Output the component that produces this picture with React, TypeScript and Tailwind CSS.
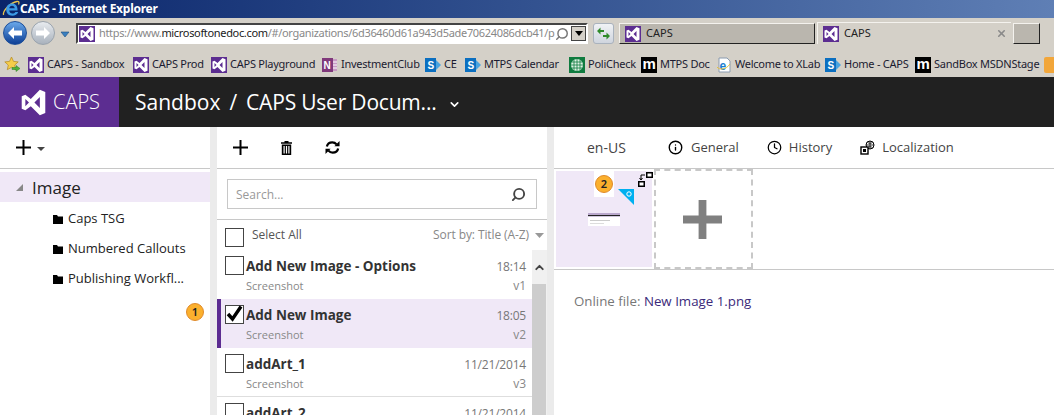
import React from "react";
import { Info, Clock, ChevronDown, ChevronUp, X, Search } from "lucide-react";

const ui = "font-['Open_Sans','Noto_Sans',sans-serif]";
const chrome = "font-['Noto_Sans','DejaVu_Sans',sans-serif]";
const VS_PATH = "M11.5 1l3 1.2v11.6l-3 1.2-5-5-3 2.3-2-.8v-7l2-.8 3 2.3 5-5ZM3.5 6v4l2-2-2-2Zm8-1L8.5 8l3 3V5Z";

function VS({ size = 16, box = true }: { size?: number; box?: boolean }) {
  return (
    <svg width={size} height={size} viewBox="0 0 16 16" className="shrink-0">
      {box && <rect width="16" height="16" fill="#5c2d91" />}
      <path fill="#fff" fillRule="evenodd" d={VS_PATH} />
    </svg>
  );
}

function SP() {
  return (
    <svg width="16" height="16" viewBox="0 0 16 16" className="shrink-0">
      <rect x="0" y="1" width="11" height="14" fill="#0b6fc0" />
      <path d="M11 3l5 5-5 5z" fill="#4aa3df" />
      <text x="2.5" y="12" fontSize="10" fontWeight="700" fill="#fff" fontFamily="Liberation Sans">S</text>
    </svg>
  );
}

function OneNote() {
  return (
    <svg width="16" height="16" viewBox="0 0 16 16" className="shrink-0">
      <rect x="0" y="1" width="11" height="14" fill="#80397b" />
      <rect x="11" y="2" width="4" height="12" fill="#c79ac4" />
      <path d="M11 5h4M11 8h4M11 11h4" stroke="#fff" strokeWidth="1" />
      <text x="1.5" y="12" fontSize="10" fontWeight="700" fill="#fff" fontFamily="Liberation Sans">N</text>
    </svg>
  );
}

function Globe() {
  return (
    <svg width="16" height="16" viewBox="0 0 16 16" className="shrink-0">
      <rect width="16" height="16" fill="#0f7b3f" />
      <circle cx="8" cy="8" r="6" fill="#dff2e4" />
      <path d="M2 8h12M3 5h10M3 11h10M8 2v12M5 3v10M11 3v10" stroke="#0f7b3f" strokeWidth=".8" />
    </svg>
  );
}

function MBox() {
  return (
    <span className="flex h-4 w-4 shrink-0 items-center justify-center bg-black pb-[3px] font-['Liberation_Sans',sans-serif] text-[15px] font-bold leading-none text-white">m</span>
  );
}

function IeDoc() {
  return (
    <svg width="16" height="16" viewBox="0 0 16 16" className="shrink-0">
      <path d="M3 1h8l3 3v11H3z" fill="#fff" stroke="#8a9bb0" />
      <text x="3.5" y="12.5" fontSize="12" fontWeight="700" fill="#1d7fd0" fontFamily="Liberation Sans">e</text>
      <path d="M1 10c2 3 9 3 13-3" stroke="#e9c23c" fill="none" strokeWidth="1" />
    </svg>
  );
}

function IeLogo() {
  return (
    <svg width="18" height="18" viewBox="0 0 18 18" className="shrink-0">
      <path d="M1.5 15C.5 11 8 3 15 1.5c2-.3 2.5 1 1.5 3" fill="none" stroke="#e8c34a" strokeWidth="1.3" />
      <path fillRule="evenodd" fill="#3c9be6" d="M10 3.5c3.5 0 5.5 2.6 5.5 6v1H7.2c.2 2 1.5 3 3.2 3 1.3 0 2.3-.5 3-1.5h2.8c-1 2.5-3.2 3.8-5.9 3.8-3.7 0-6.1-2.6-6.1-6.2S6.4 3.5 10 3.5ZM7.3 8.3h5.4c-.1-1.5-1.1-2.5-2.7-2.5s-2.5 1-2.7 2.5Z" />
    </svg>
  );
}

function Star() {
  return (
    <svg width="17" height="17" viewBox="0 0 17 17" className="shrink-0">
      <path d="M7.5 1l2 4.4 4.7.5-3.5 3.2 1 4.6-4.2-2.4-4.2 2.4 1-4.6L.8 5.9l4.7-.5z" fill="#f5cd4a" stroke="#b98f2a" strokeWidth=".8" />
      <path d="M8 11.5h4V9.5l4 3-4 3v-2H8z" fill="#4db13c" stroke="#2f7d25" strokeWidth=".5" />
    </svg>
  );
}

function NavArrow({ back }: { back?: boolean }) {
  return (
    <span className={`flex h-[24px] w-[24px] shrink-0 items-center justify-center rounded-full border ${back ? "border-[#1d4f9a] bg-gradient-to-b from-[#6aa8ea] to-[#0d3f96]" : "border-[#9aa3ad] bg-gradient-to-b from-[#e8ebef] to-[#a9b2bd]"}`}>
      <svg width="14" height="12" viewBox="0 0 14 12" className={back ? "" : "rotate-180"}>
        <path d="M0 6l6-6v3.5h8v5H6V12z" fill="#fff" />
      </svg>
    </span>
  );
}

function Bookmark({ icon, label, w }: { icon: React.ReactNode; label: string; w: string }) {
  return (
    <div className={`flex shrink-0 items-center gap-[3px] whitespace-nowrap ${w}`}>
      {icon}
      <span>{label}</span>
    </div>
  );
}

function Trash() {
  return (
    <svg width="11" height="14" viewBox="0 0 11 14">
      <path fill="#000" d="M3.5 0h4v1.2H11v1.600H0V1.200h3.500zM.8 3.600h9.400V14H.8zM2.500 5v7.600h1.200V5zm2.400 0v7.600h1.200V5zM7.300 5v7.600h1.200V5z" />
    </svg>
  );
}

function Refresh() {
  return (
    <svg width="15" height="15" viewBox="0 0 16 15" fill="none" stroke="#000" strokeWidth="2.4">
      <path d="M2 6.5C2.6 3.6 5 2 7.8 2c1.9 0 3.4.8 4.5 2.2" />
      <path d="M14 8.5c-.6 2.9-3 4.5-5.8 4.5-1.9 0-3.4-.8-4.5-2.2" />
      <path d="M15.5.6v5.500h-5.500z" fill="#000" stroke="none" />
      <path d="M.5 14.400V8.900h5.500z" fill="#000" stroke="none" />
    </svg>
  );
}

function PlusIcon({ size = 15 }: { size?: number }) {
  return (
    <svg width={size} height={size} viewBox="0 0 15 15">
      <path d="M6.5 0h2v6.5H15v2H8.5V15h-2V8.5H0v-2h6.5z" fill="#000" />
    </svg>
  );
}

function Folder() {
  return (
    <svg width="10" height="9" viewBox="0 0 10 9" className="shrink-0">
      <path d="M0 0h4l1 1.5h5V9H0z" fill="#000" />
    </svg>
  );
}

function Badge({ n }: { n: number }) {
  return (
    <span className={`flex h-[18px] w-[18px] items-center justify-center rounded-full border border-[#e08a2a] bg-[#fbb02d] text-[11px] font-semibold text-[#222] ${chrome}`}>{n}</span>
  );
}

function Check({ checked = false }: { checked?: boolean }) {
  return (
    <span className="relative block h-[19px] w-[19px] shrink-0 border border-[#444] bg-white">
      {checked && (
        <svg width="20" height="19" viewBox="0 0 20 19" className="absolute -left-[1px] -top-[2px]">
          <path d="M3 10l4.5 5L16 2.5" stroke="#000" strokeWidth="3.4" fill="none" />
        </svg>
      )}
    </span>
  );
}

function Row({ title, time, ver, selected, divider }: { title: string; time: string; ver: string; selected?: boolean; divider?: boolean }) {
  return (
    <div className={`flex h-[49px] shrink-0 ${selected ? "bg-[#f0e8f7]" : "bg-white"} ${divider ? "border-b border-[#dedede]" : ""}`}>
      <div className={`w-[4px] shrink-0 ${selected ? "bg-[#5c2d91]" : ""}`} />
      <div className="flex min-w-0 flex-1 flex-col pl-[4px] pr-[6px] pt-[5px]">
        <div className="flex h-[20px] items-center">
          <Check checked={selected} />
          <span className="ml-[2px] mt-[4px] flex-1 text-[13.5px] font-bold leading-none text-[#333]">{title}</span>
          <span className="mt-[4px] text-[12px] tracking-[-0.2px] text-[#777]">{time}</span>
        </div>
        <div className="ml-[21px] mt-[3px] flex items-center justify-between text-[11px] leading-[16px] text-[#888]">
          <span>Screenshot</span>
          <span className="text-[12px]">{ver}</span>
        </div>
      </div>
    </div>
  );
}

function TreeItem({ label }: { label: string }) {
  return (
    <div className="flex h-[30px] items-center gap-[5px] pl-[53px] text-[13px] text-[#222]">
      <Folder />
      <span>{label}</span>
    </div>
  );
}

export default function App() {
  return (
    <div className={`flex h-[415px] w-[1054px] flex-col overflow-hidden bg-white ${ui}`}>
      {/* Title bar */}
      <div className="flex h-[18px] shrink-0 items-center bg-gradient-to-r from-[#0a246a] to-[#5f7fb5] pl-[2px] text-[12px] font-bold text-white">
        <IeLogo />
        <span className={`tracking-[-0.25px] ${chrome}`}>CAPS - Internet Explorer</span>
      </div>

      {/* Address + tabs */}
      <div className={`flex h-[34px] shrink-0 items-start bg-[#d4d0c8] pt-[5px] ${chrome}`}>
        <div className="flex w-[76px] shrink-0 items-center pl-[3px]">
          <div className="-mt-[2px] flex items-center gap-[4px]">
            <NavArrow back />
            <NavArrow />
          </div>
          <svg width="10" height="7" viewBox="0 0 10 7" className="ml-[5px]"><path d="M1 1h8L5 6z" fill="#3a7fc0" stroke="#1c4f80" strokeWidth=".6" /></svg>
        </div>
        <div className="flex h-[21px] w-[512px] shrink-0 items-center border-2 border-[#444] border-b-white border-r-white bg-white pl-[1px] text-[11px] tracking-[-0.33px] text-[#888]">
          <VS />
          <span className="ml-[4px] min-w-0 flex-1 whitespace-nowrap">https://www.<span className="text-[#1a1a1a]">microsoftonedoc.com</span>/#/organizations/6d36460d61a943d5ade70624086dcb41/p</span>
          <Search size={14} className="mx-[2px] shrink-0 -scale-x-100 text-[#777]" strokeWidth={2.5} />
          <span className="flex h-[15px] w-[15px] shrink-0 items-center justify-center border border-[#444] bg-[#d4d0c8]">
            <svg width="8" height="5" viewBox="0 0 8 5"><path d="M0 0h8L4 5z" fill="#000" /></svg>
          </span>
        </div>
        <span className="ml-[5px] flex h-[21px] w-[21px] shrink-0 items-center justify-center rounded-[3px] border border-[#a9b2bd] bg-gradient-to-b from-[#f0f2f5] to-[#cfd5de]">
          <svg width="15" height="13" viewBox="0 0 15 13"><path d="M1 4l3.5-3.5V3H8v2H4.500v2.500z" fill="#2f8a2a" /><path d="M14 9l-3.500 3.500V10H7V8h3.500V5.500z" fill="#2f8a2a" /></svg>
        </span>
        <div className="ml-[5px] flex h-[21px] w-[196px] shrink-0 items-center border border-[#f4f2ee] border-b-[#222] border-r-[#222] bg-[#bab6ae] pl-[5px] text-[11px] text-[#222]">
          <VS />
          <span className="ml-[5px]">CAPS</span>
        </div>
        <div className="ml-[2px] -mt-[1px] flex h-[22px] w-[194px] shrink-0 items-center border-l border-t border-[#f4f2ee] pl-[5px] text-[11px] text-[#222]">
          <VS />
          <span className="ml-[5px] flex-1">CAPS</span>
          <X size={11} strokeWidth={3.5} className="mr-[4px] text-[#8a8a8a]" />
        </div>
        <div className="ml-[2px] h-[21px] w-[27px] shrink-0 border border-[#f4f2ee] border-b-[#222] border-r-[#222] bg-[#bab6ae]" />
      </div>

      {/* Bookmarks */}
      <div className={`flex h-[25px] shrink-0 items-center overflow-hidden whitespace-nowrap bg-[#d4d0c8] pl-[4px] text-[11px] tracking-[-0.25px] text-[#1b1b30] ${chrome}`}>
        <span className="w-[24px] shrink-0"><Star /></span>
        <Bookmark icon={<VS />} label="CAPS - Sandbox" w="w-[105px]" />
        <Bookmark icon={<VS />} label="CAPS Prod" w="w-[78px]" />
        <Bookmark icon={<VS />} label="CAPS Playground" w="w-[111px]" />
        <Bookmark icon={<OneNote />} label="InvestmentClub" w="w-[103px]" />
        <Bookmark icon={<SP />} label="CE" w="w-[40px]" />
        <Bookmark icon={<SP />} label="MTPS Calendar" w="w-[104px]" />
        <Bookmark icon={<Globe />} label="PoliCheck" w="w-[72px]" />
        <Bookmark icon={<MBox />} label="MTPS Doc" w="w-[75px]" />
        <Bookmark icon={<IeDoc />} label="Welcome to XLab" w="w-[109px]" />
        <Bookmark icon={<SP />} label="Home - CAPS" w="w-[90px]" />
        <Bookmark icon={<MBox />} label="SandBox MSDNStage" w="w-[129px]" />
        <span className="h-4 w-4 shrink-0 rounded-[2px] bg-[#f2a63a]" />
      </div>

      {/* App header */}
      <div className="flex h-[50px] shrink-0 bg-[#212121] text-white">
        <div className="flex w-[119px] shrink-0 items-center bg-[#5c2d91] pl-[19px]">
          <VS size={29} box={false} />
          <span className="ml-[5px] text-[20px] font-light leading-none">CAPS</span>
        </div>
        <div className="flex items-center pl-[16px] pt-[1px] text-[21px] leading-none">
          <span>Sandbox</span>
          <span className="mx-[9px]">/</span>
          <span className="tracking-[-0.2px]">CAPS User Docum...</span>
          <ChevronDown size={13} strokeWidth={3} className="ml-[11px] mt-[4px]" />
        </div>
      </div>

      {/* Body */}
      <div className="flex min-h-0 flex-1 bg-[#ebebeb]">
        {/* Tree */}
        <div className="flex w-[210px] shrink-0 flex-col bg-white">
          <div className="flex h-[42px] shrink-0 items-center border-b border-[#c8c8c8] pl-[16px]">
            <PlusIcon />
            <svg width="8" height="4" viewBox="0 0 8 4" className="ml-[6px] mt-[3px]"><path d="M0 0h8L4 4z" fill="#444" /></svg>
          </div>
          <div className="mt-[3px] flex h-[30px] shrink-0 items-center bg-[#f0e8f7] pl-[16px]">
            <svg width="7" height="7" viewBox="0 0 7 7"><path d="M7 0v7H0z" fill="#888" /></svg>
            <span className="ml-[9px] mt-[1px] text-[17px] text-[#222]">Image</span>
          </div>
          <div className="mt-[2px]">
            <TreeItem label="Caps TSG" />
            <TreeItem label="Numbered Callouts" />
            <TreeItem label="Publishing Workfl..." />
          </div>
          <div className="mt-[9px] flex justify-end pr-[6px]"><Badge n={1} /></div>
        </div>

        {/* List */}
        <div className="ml-[7px] flex w-[330px] shrink-0 flex-col bg-white">
          <div className="flex h-[42px] shrink-0 items-center border-b border-[#c8c8c8] pl-[16px]">
            <PlusIcon />
            <span className="ml-[33px] flex"><Trash /></span>
            <span className="ml-[33px] flex"><Refresh /></span>
          </div>
          <div className="flex h-[51px] shrink-0 items-center border-b border-[#c8c8c8] px-[10px]">
            <div className="flex h-[30px] flex-1 items-center justify-between border border-[#c8c8c8] pl-[8px] pr-[10px]">
              <span className="mt-[2px] text-[12px] text-[#999]">Search...</span>
              <Search size={15} strokeWidth={3} className="-scale-x-100 text-[#444]" />
            </div>
          </div>
          <div className="flex h-[30px] shrink-0 items-center pl-[8px] pr-[3px]">
            <span className="mt-[5px]"><Check /></span>
            <span className="ml-[8px] mt-[0px] flex-1 text-[12px] text-[#555]">Select All</span>
            <span className="text-[12px] tracking-[-0.1px] text-[#888]">Sort by: Title (A-Z)</span>
            <svg width="9" height="5" viewBox="0 0 9 5" className="ml-[6px]"><path d="M0 0h9L4.5 5z" fill="#999" /></svg>
          </div>
          <div className="flex min-h-0 flex-1">
            <div className="flex min-w-0 flex-1 flex-col overflow-hidden">
              <Row title="Add New Image - Options" time="18:14" ver="v1" />
              <Row title="Add New Image" time="18:05" ver="v2" selected />
              <Row title="addArt_1" time="11/21/2014" ver="v3" divider />
              <Row title="addArt_2" time="11/21/2014" ver="v1" />
            </div>
            <div className="flex w-[15px] shrink-0 flex-col bg-[#f0f0f0]">
              <div className="flex h-[34px] shrink-0 items-center justify-center">
                <ChevronUp size={13} strokeWidth={3.5} className="text-[#444]" />
              </div>
              <div className="mr-[1px] flex-1 bg-[#cdcdcd]" />
            </div>
          </div>
        </div>

        {/* Detail */}
        <div className="ml-[7px] flex min-w-0 flex-1 flex-col bg-white">
          <div className="flex h-[42px] shrink-0 items-center whitespace-nowrap border-b border-[#c8c8c8] pl-[33px] text-[13px] text-[#444]">
            <span className="w-[38px] text-[14px]">en-US</span>
            <span className="ml-[43px] flex items-center gap-[8px]"><Info size={15} strokeWidth={2.2} className="text-black" />General</span>
            <span className="ml-[28px] flex items-center gap-[7px]"><Clock size={15} strokeWidth={2} className="text-black" />History</span>
            <span className="ml-[28px] flex items-center gap-[7px]">
              <svg width="15" height="15" viewBox="0 0 15 15" fill="none" stroke="#000" strokeWidth="1">
                <circle cx="10" cy="5" r="4" fill="#fff" />
                <path d="M6 5h8M10 1v8M7.5 2.5c1.500 1 3.500 1 5 0M7.500 7.500c1.500-1 3.500-1 5 0" strokeWidth=".8" />
                <rect x="1" y="7" width="7" height="7" fill="#fff" strokeWidth="1.4" />
                <rect x="3" y="9" width="3" height="3" fill="#000" stroke="none" />
              </svg>
              Localization
            </span>
          </div>
          <div className="flex h-[101px] shrink-0 items-start border-b border-[#c8c8c8]">
            <div className="relative ml-[2px] mt-[2px] h-[96px] w-[96px] shrink-0 bg-[#f0e8f7]">
              <div className="absolute left-[38px] top-0 flex h-[26px] w-[20px] items-center justify-center bg-white"><Badge n={2} /></div>
              <svg width="16" height="16" viewBox="0 0 16 16" className="absolute left-[62px] top-[18px]">
                <path d="M0 0h16v16z" fill="#00b0f0" />
                <circle cx="11" cy="5" r="2.2" fill="none" stroke="#fff" strokeWidth="1" />
              </svg>
              <svg width="16" height="16" viewBox="0 0 16 16" className="absolute left-[81px] top-[0px]">
                <rect x="9" y="1" width="7" height="6" fill="#000" />
                <rect x="10.5" y="2.5" width="4" height="3" fill="#fff" />
                <rect x="1" y="10" width="7" height="6" fill="#000" />
                <rect x="2.5" y="11.5" width="4" height="3" fill="#fff" />
                <path d="M8 4H4v5M2.5 7l1.5 2 1.5-2" fill="none" stroke="#000" />
              </svg>
              <div className="absolute left-[32px] top-[42px] flex h-[13px] w-[32px] flex-col bg-white">
                <div className="h-[2px] bg-[#b9a8cc]" />
                <div className="h-[1px] bg-[#222]" />
                <div className="h-[1px] bg-[#cfc6dc]" />
                <div className="ml-[2px] mt-[3px] h-[1px] w-[20px] bg-[#ccc]" />
                <div className="ml-[2px] mt-[2px] h-[1px] w-[14px] bg-[#ddd]" />
              </div>
            </div>
            <div className="ml-[2px] flex h-[100px] w-[99px] shrink-0 items-center justify-center border-2 border-dashed border-[#c8c8c8] pr-[2px] pt-[1px]">
              <svg width="39" height="39" viewBox="0 0 40 40"><path d="M16 0h8v16h16v8H24v16h-8V24H0v-8h16z" fill="#808080" /></svg>
            </div>
          </div>
          <div className="pl-[20px] pt-[22px] text-[13.3px] text-[#777]">
            Online file: <span className="text-[#3b2a7a]">New Image 1.png</span>
          </div>
        </div>
      </div>
    </div>
  );
}
